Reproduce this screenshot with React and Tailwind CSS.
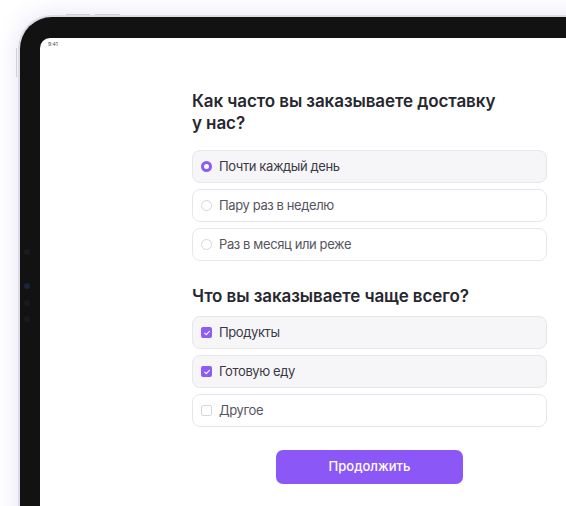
import React from "react";

function Radio({ on }) {
  return on ? (
    <span className="block w-[11px] h-[11px] rounded-full border-[3px] border-[#8b5cf6] bg-white shrink-0" />
  ) : (
    <span className="block w-[11px] h-[11px] rounded-full border border-[#d6d6db] bg-white shrink-0" />
  );
}

function Check({ on }) {
  return on ? (
    <span className="flex items-center justify-center w-[11px] h-[11px] rounded-[2px] bg-[#8b5cf6] shrink-0">
      <svg width="8" height="8" viewBox="0 0 8 8" fill="none">
        <path d="M1.6 4.1 L3.3 5.7 L6.4 2.4" stroke="white" strokeWidth="1.1" strokeLinecap="round" strokeLinejoin="round" />
      </svg>
    </span>
  ) : (
    <span className="block w-[11px] h-[11px] rounded-[2px] border border-[#d6d6db] bg-white shrink-0" />
  );
}

function Option({ on, children, kind }) {
  return (
    <div
      className={
        "flex items-center h-[33px] rounded-[8px] border pl-[8px] gap-[7px] " +
        (on ? "bg-[#f6f6f8] border-[#e7e7eb]" : "bg-white border-[#e7e7eb]")
      }
    >
      {kind === "radio" ? <Radio on={on} /> : <Check on={on} />}
      <span className={"text-[13px] tracking-[-0.03em] leading-none " + (on ? "text-[#3a3a44]" : "text-[#55555f]")}>{children}</span>
    </div>
  );
}

export default function App() {
  return (
    <div
      className="relative w-[566px] h-[506px] overflow-hidden bg-white"
      style={{ fontFamily: "Inter, 'Noto Sans', sans-serif" }}
    >
      <div className="pl-[20px] pt-[17px]">
        <div className="relative w-[620px] h-[560px] rounded-[32px] bg-[#121212] ring-2 ring-[#dcdce2] shadow-[0_0_26px_rgba(120,100,210,0.22)] pl-[20px] pt-[21px]">
          {/* side buttons */}
          <span className="absolute left-[46px] top-[-3px] w-[24px] h-px bg-[#cfcfd4]" />
          <span className="absolute left-[75px] top-[-3px] w-[25px] h-px bg-[#cfcfd4]" />
          <span className="absolute left-[-4px] top-[31px] w-px h-[29px] bg-[#cfcfd4]" />
          {/* bezel dots */}
          <span className="absolute left-[4px] top-[232px] w-[6px] h-[6px] rounded-full bg-[#1a1a1c]" />
          <span className="absolute left-[4px] top-[266px] w-[6px] h-[6px] rounded-full bg-[#1b2438]" />
          <span className="absolute left-[4px] top-[283px] w-[6px] h-[6px] rounded-full bg-[#1a1a1c]" />
          <span className="absolute left-[4px] top-[299px] w-[6px] h-[6px] rounded-full bg-[#1a1a1c]" />

          <div className="h-full w-full rounded-[10px] bg-white">
            <div className="h-[12px] pl-[8px] pt-[3px] text-[5px] leading-[6px] text-[#444]">9:41</div>
            <div className="ml-[152px] w-[355px] mt-[40px]">
              <h1 className="text-[17px] tracking-[-0.005em] leading-[22px] font-semibold text-[#272730]">
                <span className="block">Как часто вы заказываете доставку</span>
                <span className="block">у нас?</span>
              </h1>
              <div className="mt-[16px] flex flex-col gap-[6px]">
                <Option kind="radio" on>Почти каждый день</Option>
                <Option kind="radio">Пару раз в неделю</Option>
                <Option kind="radio">Раз в месяц или реже</Option>
              </div>
              <h2 className="mt-[24px] text-[17px] tracking-[-0.005em] leading-[22px] font-semibold text-[#272730]">
                Что вы заказываете чаще всего?
              </h2>
              <div className="mt-[9px] flex flex-col gap-[6px]">
                <Option kind="check" on>Продукты</Option>
                <Option kind="check" on>Готовую еду</Option>
                <Option kind="check">Другое</Option>
              </div>
              <div className="mt-[23px] flex justify-center">
                <button className="w-[187px] h-[34px] rounded-[7px] bg-[#8b57f6] text-white text-[13px] font-medium">
                  Продолжить
                </button>
              </div>
            </div>
          </div>
        </div>
      </div>
    </div>
  );
}
